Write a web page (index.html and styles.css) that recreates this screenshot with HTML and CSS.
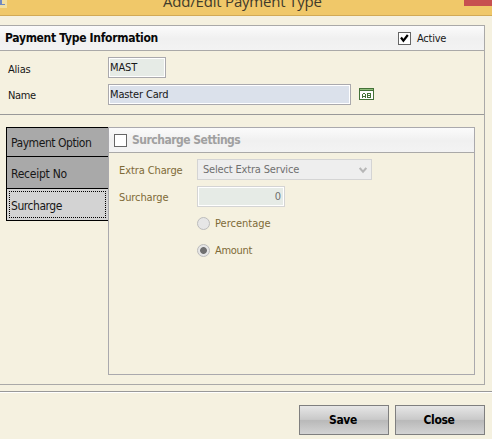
FILE: index.html
```
<!DOCTYPE html>
<html lang="en">
<head>
<meta charset="utf-8">
<title>Add/Edit Payment Type</title>
<link rel="stylesheet" href="styles.css">
</head>
<body>
<div class="window">
  <header class="titlebar">
    <svg class="app-icon" width="7" height="8" viewBox="0 0 7 8"><path fill="#f2dfa0" d="M0 0h7v8H0z"/><path fill="#7189c0" d="M0 0h2v4h3v1H0z"/></svg>
    <h1 class="title">Add/Edit Payment Type</h1>
    <span class="window-close"></span>
  </header>
  <main class="panel">
    <div class="panel-head">
      <h2 class="heading info-heading">Payment Type Information</h2>
      <label class="active"><span class="checkbox"><svg width="11" height="11" viewBox="0 0 11 11"><path d="M2 4.5 4.4 7.6 8.8 2" fill="none" stroke="#000" stroke-width="2.2"/></svg></span><span class="active-text">Active</span></label>
    </div>
    <div class="fields">
      <div class="row"><span class="label alias">Alias</span><div class="input short"><span class="mast">MAST</span></div></div>
      <div class="row"><span class="label name">Name</span><div class="input long"><span class="master">Master Card</span></div>
        <svg class="ab-icon" width="15" height="12" viewBox="0 0 15 12" shape-rendering="crispEdges"><path fill="#447238" d="M0 0h15v12H0z"/><path fill="#8fbd7c" d="M1 1h13v1H1z"/><path fill="#fff" d="M1 3h13v8H1z"/><path fill="#447238" d="M3 6h1v4H3zM4 5h2v1H4zM6 6h1v4H6zM4 8h2v1H4zM8 5h1v5H8zM9 5h3v1H9zM9 7h3v1H9zM9 9h3v1H9zM11 6h1v3h-1z"/></svg>
      </div>
    </div>
    <div class="details">
      <nav class="tabs">
        <div class="tab first"><span class="tab-payment">Payment Option</span></div>
        <div class="tab second"><span class="tab-receipt">Receipt No</span></div>
        <div class="tab selected"><span class="tab-surcharge">Surcharge</span></div>
      </nav>
      <section class="settings">
        <div class="settings-head"><span class="checkbox"></span><h2 class="heading settings-heading">Surcharge Settings</h2></div>
        <div class="settings-body">
          <div class="row"><span class="label extra">Extra Charge</span><div class="select"><span class="service">Select Extra Service</span><svg width="8" height="7" viewBox="0 0 8 7"><path d="M.7 1 4 4.700 7.300 1" fill="none" stroke="#b7b7b7" stroke-width="2"/></svg></div></div>
          <div class="row"><span class="label sur">Surcharge</span><div class="input number">0</div></div>
          <div class="radios">
            <label class="option"><span class="radio"></span><span class="percentage">Percentage</span></label>
            <label class="option"><span class="radio on"></span><span class="amount">Amount</span></label>
          </div>
        </div>
      </section>
    </div>
  </main>
  <footer class="actions">
    <button class="button"><span class="save">Save</span></button>
    <button class="button"><span class="close">Close</span></button>
  </footer>
</div>
</body>
</html>
```
FILE: styles.css
```
* { box-sizing: border-box; }
body { margin: 0; background: #f5f1e0; color: #171717; font: 11px/14px "DejaVu Sans Condensed", "DejaVu Sans", sans-serif; font-stretch: condensed; }
.window { width: 492px; height: 439px; overflow: hidden; }
.titlebar { height: 16px; background: #f0c869; border-bottom: 1px solid #d2aa55; display: flex; align-items: flex-start; overflow: hidden; }
.app-icon { flex: none; }
.title { margin: -9px 0 0 156px; width: 301px; font: 15px/20px "Open Sans", sans-serif; color: #413b2b; white-space: nowrap; letter-spacing: -.2px; }
.window-close { width: 28px; height: 6px; background: #c75050; }
.panel { width: 485px; height: 360px; margin-top: 9px; border: 1px solid #aaa9a8; border-left: 0; }
.panel-head, .settings-head { display: flex; align-items: center; background: linear-gradient(#fbfbfb, #f0f0f0 52%, #f3f3f3); border-bottom: 1px solid #aaa9a8; }
.panel-head { height: 25px; padding-left: 5px; }
.heading { margin: 0; font-size: 12px; line-height: 16px; font-weight: bold; white-space: nowrap; }
.info-heading { width: 393px; color: #080808; letter-spacing: -.3px; }
.active { display: flex; align-items: center; gap: 6px; }
.active-text { letter-spacing: -.25px; padding-top: 1px; }
.checkbox { width: 13px; height: 13px; flex: none; display: block; border: 1px solid #666; background: #fff; }
.checkbox svg { display: block; }
.fields { height: 64px; padding-top: 6px; border-bottom: 1px solid #999; }
.row { display: flex; height: 21px; margin-bottom: 6px; align-items: center; white-space: nowrap; }
.label { width: 100px; margin-left: 8px; padding-top: 3px; }
.alias { padding-top: 4px; letter-spacing: -.2px; }
.name { letter-spacing: -.4px; }
.input { height: 21px; border: 1px solid #aaa9ad; box-shadow: inset 0 0 0 1px #fff; background: #e6ebe6; line-height: 18px; padding: 1px 0 0 1px; letter-spacing: -.15px; }
.short { width: 58px; }
.long { width: 243px; background: #dbe1eb; }
.ab-icon { margin: 0 0 1px 8px; }
.details { display: flex; padding: 12px 0 0 6px; }
.tabs { width: 102px; height: 94px; border: solid #000; border-width: 1px 0 1px 1px; font-size: 12px; letter-spacing: -.45px; }
.tab { display: flex; align-items: center; padding-left: 4px; background: #a9a9a9; white-space: nowrap; }
.first { height: 29px; border-bottom: 1px solid #000; padding-top: 1px; }
.second { height: 32px; border-bottom: 1px solid #000; padding-top: 2px; letter-spacing: -.25px; }
.selected { height: 31px; background: #d3d3d3; padding-top: 3px; outline: 1px dotted #000; outline-offset: -3px; }
.settings { width: 367px; height: 248px; border: 1px solid #aaa9ad; }
.settings-head { height: 25px; padding-left: 5px; }
.settings-heading { margin-left: 5px; color: #a0a0a0; letter-spacing: -.5px; }
.settings-body { padding-top: 6px; color: #7e6a37; }
.settings-body .label { width: 78px; margin-left: 10px; padding-top: 2px; letter-spacing: -.1px; }
.select { width: 175px; height: 21px; background: #eee; border: 1px solid #d4d4d4; color: #707070; display: flex; align-items: center; justify-content: space-between; padding: 1px 4px 0 5px; letter-spacing: -.17px; }
.number { width: 88px; border-color: #d4d4d4; text-align: right; color: #707070; padding: 1px 3px 0 0; }
.radios { padding-left: 88px; margin-top: 9px; }
.option { display: flex; align-items: center; height: 14px; margin-bottom: 13px; gap: 5px; }
.percentage, .amount { padding-top: 1px; }
.amount { letter-spacing: -.3px; }
.radio { width: 13px; height: 13px; flex: none; border: 1px solid #bcbcbc; border-radius: 50%; background: #e6e6e6; }
.radio.on { background: radial-gradient(circle, #707070 0 3px, #e6e6e6 3.8px); }
.actions { height: 48px; margin-top: 6px; border-top: 1px solid #999; box-shadow: inset 0 1px #fff; padding: 13px 7px 0 0; display: flex; justify-content: flex-end; gap: 6px; }
.button { width: 90px; height: 30px; padding: 0 2px 0 0; border: 1px solid #7f7f7f; background: linear-gradient(#e6e6e6, #c9c9c9 48%, #b9b9b9 52%, #d3d3d3); font: bold 12px/14px "DejaVu Sans Condensed", "DejaVu Sans", sans-serif; letter-spacing: -.4px; color: #000; }
```
